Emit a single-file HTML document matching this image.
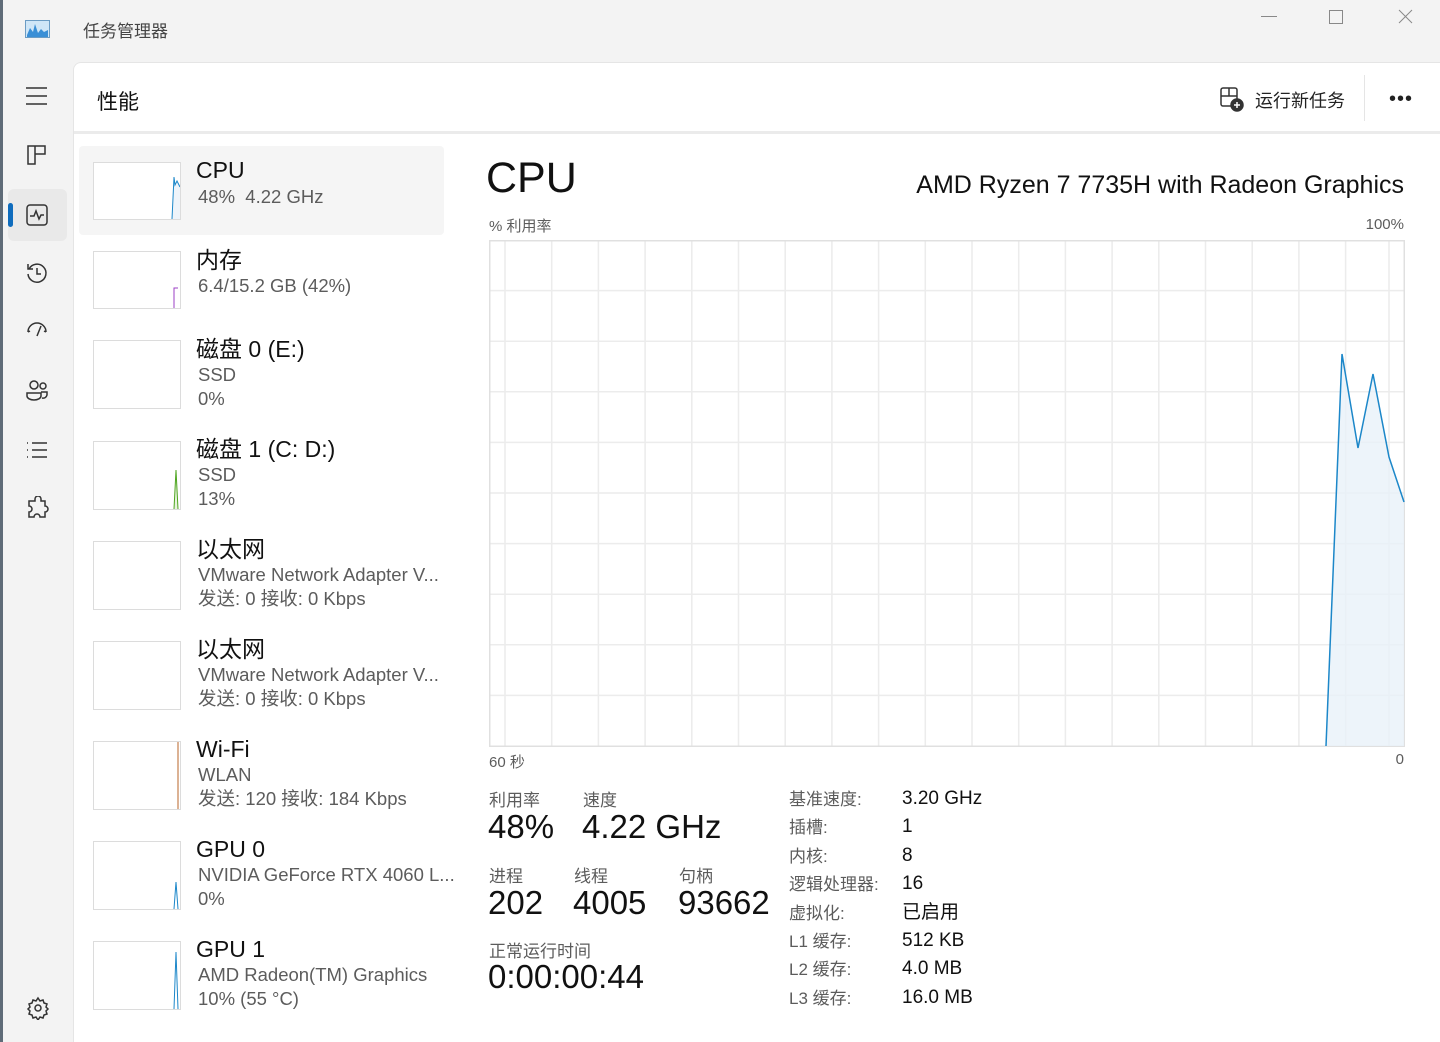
<!DOCTYPE html><html><head><meta charset="utf-8"><style>
*{margin:0;padding:0;box-sizing:border-box}
body{width:1440px;height:1042px;background:#f3f3f3;font-family:"Liberation Sans","Noto Sans CJK SC",sans-serif;position:relative;overflow:hidden;color:#1a1a1a}
.a{position:absolute;white-space:nowrap}
.panel{position:absolute;left:73px;top:62px;width:1367px;height:980px;background:#fff;border-top-left-radius:8px;border-top:1px solid #e5e5e5;border-left:1px solid #e5e5e5}
.hdr{position:absolute;left:74px;top:131px;width:1366px;height:3px;background:#ebebeb}
.th{position:absolute;left:93px;width:88px;border:1px solid #dcdcdc;background:#fff}
.t1{font-size:23px;color:#111;line-height:26px}
.t2{font-size:18.5px;color:#5c5c5c;line-height:24px}
.lbl{font-size:17px;color:#5c5c5c}
.big{font-size:33px;color:#111}
.k{font-size:17px;color:#5c5c5c}
.v{font-size:19px;color:#111}
svg.i{position:absolute;fill:none;stroke:#333;stroke-width:1.5}
</style></head><body>
<div style="position:absolute;left:0;top:0;width:3px;height:1042px;background:#5f6b78"></div>
<svg class="a" style="left:25px;top:20px" width="25" height="18"><rect x="0.5" y="0.5" width="24" height="17" fill="#cfe6f7" stroke="#6b9cc4"/><path d="M2 15 L5 8 L8 12 L10 4 L13 13 L16 9 L19 12 L23 10 L23 17 L2 17Z" fill="#3a8fd6"/></svg>
<div class="a" style="left:83px;top:17px;font-size:17px;color:#444">任务管理器</div>
<svg class="i" style="left:1261px;top:8px;stroke:#888;stroke-width:1" width="170" height="20"><path d="M0 8.5h16"/><rect x="68.5" y="2.5" width="13" height="13"/><path d="M138 2l13 13M151 2l-13 13"/></svg>
<div class="panel"></div><div class="hdr"></div>
<div class="a" style="left:97px;top:86px;font-size:21px;color:#111">性能</div>
<svg class="i" style="left:1219px;top:86px" width="26" height="26"><rect x="2" y="2" width="16" height="18" rx="2"/><path d="M2 10h16M10 2v8"/><circle cx="18" cy="19" r="6" fill="#333"/><path d="M18 16v6M15 19h6" stroke="#fff"/></svg>
<div class="a" style="left:1255px;top:87px;font-size:18px;color:#222">运行新任务</div>
<div style="position:absolute;left:1364px;top:75px;width:1px;height:46px;background:#e5e5e5"></div>
<div class="a" style="left:1389px;top:88px;font-size:20px;letter-spacing:1px;color:#222">•••</div>
<!-- sidebar -->
<div style="position:absolute;left:8px;top:189px;width:59px;height:52px;background:#e9e9e9;border-radius:6px"></div>
<div style="position:absolute;left:8px;top:203px;width:5px;height:24px;background:#0f6cbd;border-radius:3px"></div>
<svg class="i" style="left:25px;top:86px" width="24" height="20"><path d="M1 2h21M1 10h21M1 18h21"/></svg>
<svg class="i" style="left:26px;top:144px" width="22" height="22"><path d="M2 2h7v18H2zM9 2h10v8H9zM9 10h5"/></svg>
<svg class="i" style="left:26px;top:204px" width="22" height="22"><rect x="1" y="1" width="20" height="20" rx="3"/><path d="M4 12h4l2-5 3 8 2-4h3"/></svg>
<svg class="i" style="left:25px;top:261px" width="24" height="24"><path d="M4 8a9 9 0 1 1-1 5M3 3v5h5M12 7v6h4"/></svg>
<svg class="i" style="left:25px;top:320px" width="24" height="20"><path d="M3 12a9 9 0 0 1 18 0M12 16l4-10M3 12l2-1M21 12l-2-1"/></svg>
<svg class="i" style="left:25px;top:378px" width="24" height="26"><circle cx="9" cy="7" r="4"/><circle cx="18" cy="8" r="3"/><path d="M2 18a7 4 0 0 0 14 0v-3H2zM16 14h6v3a4 4 0 0 1-5 3"/></svg>
<svg class="i" style="left:25px;top:440px" width="24" height="20"><path d="M7 3h15M7 10h15M7 17h15M2 3h1M2 10h1M2 17h1"/></svg>
<svg class="i" style="left:25px;top:496px" width="26" height="26"><path d="M10 3a3 3 0 0 1 6 0v2h4v5a3 3 0 0 1 0 6v5h-5a3 3 0 0 0-6 0H4v-5a3 3 0 0 0 0-6V5h6z"/></svg>
<svg class="i" style="left:26px;top:996px" width="24" height="24"><circle cx="12" cy="12" r="3"/><path d="M12 2l2 3 3-1 1 3 3 1-1 3 2 2-2 2 1 3-3 1-1 3-3-1-2 3-2-3-3 1-1-3-3-1 1-3-2-2 2-2-1-3 3-1 1-3 3 1z"/></svg>
<!-- list -->
<div style="position:absolute;left:79px;top:146px;width:365px;height:89px;background:#f5f5f5;border-radius:4px"></div>
<div class="th" style="top:162px;height:58px"><svg width="86" height="56" style="position:absolute;left:0;top:0"><path d="M78 56L80 14L81 22L83 18L86 24V56Z" fill="#eef4fa"/><path d="M78 56L80 14L81 22L83 18L86 24" stroke="#1c87c9" fill="none"/></svg></div>
<div class="a t1" style="left:196px;top:157px">CPU</div><div class="a t2" style="left:198px;top:185px">48%&nbsp; 4.22 GHz</div>
<div class="th" style="top:251px;height:58px"><svg width="86" height="56"><path d="M80 56V36H84" stroke="#9b3fc4" fill="none"/></svg></div>
<div class="a t1" style="left:196px;top:247px">内存</div><div class="a t2" style="left:198px;top:274px">6.4/15.2 GB (42%)</div>
<div class="th" style="top:340px;height:69px"></div>
<div class="a t1" style="left:196px;top:336px">磁盘 0 (E:)</div><div class="a t2" style="left:198px;top:363px">SSD<br>0%</div>
<div class="th" style="top:441px;height:69px"><svg width="86" height="67"><path d="M80 67L82 28L84 67Z" fill="#e7f3dc"/><path d="M80 67L82 28L84 67" stroke="#4da51f" fill="none"/></svg></div>
<div class="a t1" style="left:196px;top:436px">磁盘 1 (C: D:)</div><div class="a t2" style="left:198px;top:463px">SSD<br>13%</div>
<div class="th" style="top:541px;height:69px"></div>
<div class="a t1" style="left:196px;top:536px">以太网</div><div class="a t2" style="left:198px;top:563px">VMware Network Adapter V...<br>发送: 0 接收: 0 Kbps</div>
<div class="th" style="top:641px;height:69px"></div>
<div class="a t1" style="left:196px;top:636px">以太网</div><div class="a t2" style="left:198px;top:663px">VMware Network Adapter V...<br>发送: 0 接收: 0 Kbps</div>
<div class="th" style="top:741px;height:69px"><svg width="86" height="67"><path d="M84 67V0" stroke="#b8652a" fill="none"/></svg></div>
<div class="a t1" style="left:196px;top:736px">Wi-Fi</div><div class="a t2" style="left:198px;top:763px">WLAN<br>发送: 120 接收: 184 Kbps</div>
<div class="th" style="top:841px;height:69px"><svg width="86" height="67"><path d="M80 67L82 40L84 67" stroke="#1c87c9" fill="none"/></svg></div>
<div class="a t1" style="left:196px;top:836px">GPU 0</div><div class="a t2" style="left:198px;top:863px">NVIDIA GeForce RTX 4060 L...<br>0%</div>
<div class="th" style="top:941px;height:69px"><svg width="86" height="67"><path d="M80 67L82 10L84 67" stroke="#1c87c9" fill="none"/></svg></div>
<div class="a t1" style="left:196px;top:936px">GPU 1</div><div class="a t2" style="left:198px;top:963px">AMD Radeon(TM) Graphics<br>10% (55 °C)</div>
<!-- main -->
<div class="a" style="left:486px;top:154px;font-size:43px;color:#111">CPU</div>
<div class="a" style="right:36px;top:171px;font-size:25px;color:#111">AMD Ryzen 7 7735H with Radeon Graphics</div>
<div class="a lbl" style="left:489px;top:215px;font-size:15px">% 利用率</div>
<div class="a lbl" style="right:36px;top:216px;font-size:15px">100%</div>
<svg class="a" style="left:489px;top:240px" width="916" height="507">
<g stroke="#ececec" stroke-width="1.5" fill="none">
<path d="M16 0V506M62.7 0V506M109.4 0V506M156.1 0V506M202.8 0V506M249.5 0V506M296.2 0V506M342.9 0V506M389.6 0V506M436.3 0V506M483 0V506M529.7 0V506M576.4 0V506M623.1 0V506M669.8 0V506M716.5 0V506M763.2 0V506M809.9 0V506M856.6 0V506M900 0V506"/>
<path d="M0 50.6H915M0 101.2H915M0 151.8H915M0 202.4H915M0 253H915M0 303.6H915M0 354.2H915M0 404.8H915M0 455.4H915"/>
</g>
<rect x="0.75" y="0.75" width="914.5" height="505.5" fill="none" stroke="#e0e0e0" stroke-width="1.5"/>
<path d="M837 506L853 114L869 208L884 134L900 217L915 262V506Z" fill="#e9f1f9" opacity="0.8"/>
<path d="M837 506L853 114L869 208L884 134L900 217L915 262" stroke="#1c87c9" stroke-width="1.5" fill="none"/>
</svg>
<div class="a lbl" style="left:489px;top:751px;font-size:15px">60 秒</div>
<div class="a lbl" style="right:36px;top:751px;font-size:15px">0</div>
<div class="a lbl" style="left:489px;top:786px">利用率</div><div class="a lbl" style="left:583px;top:786px">速度</div>
<div class="a big" style="left:488px;top:808px">48%</div><div class="a big" style="left:582px;top:808px">4.22 GHz</div>
<div class="a lbl" style="left:489px;top:862px">进程</div><div class="a lbl" style="left:574px;top:862px">线程</div><div class="a lbl" style="left:679px;top:862px">句柄</div>
<div class="a big" style="left:488px;top:884px">202</div><div class="a big" style="left:573px;top:884px">4005</div><div class="a big" style="left:678px;top:884px">93662</div>
<div class="a lbl" style="left:489px;top:937px">正常运行时间</div>
<div class="a big" style="left:488px;top:958px">0:00:00:44</div>
<div class="a k" style="left:789px;top:786px;line-height:28.4px">基准速度:<br>插槽:<br>内核:<br>逻辑处理器:<br>虚拟化:<br>L1 缓存:<br>L2 缓存:<br>L3 缓存:</div>
<div class="a v" style="left:902px;top:785px;line-height:28.4px">3.20 GHz<br>1<br>8<br>16<br>已启用<br>512 KB<br>4.0 MB<br>16.0 MB</div>
</body></html>
